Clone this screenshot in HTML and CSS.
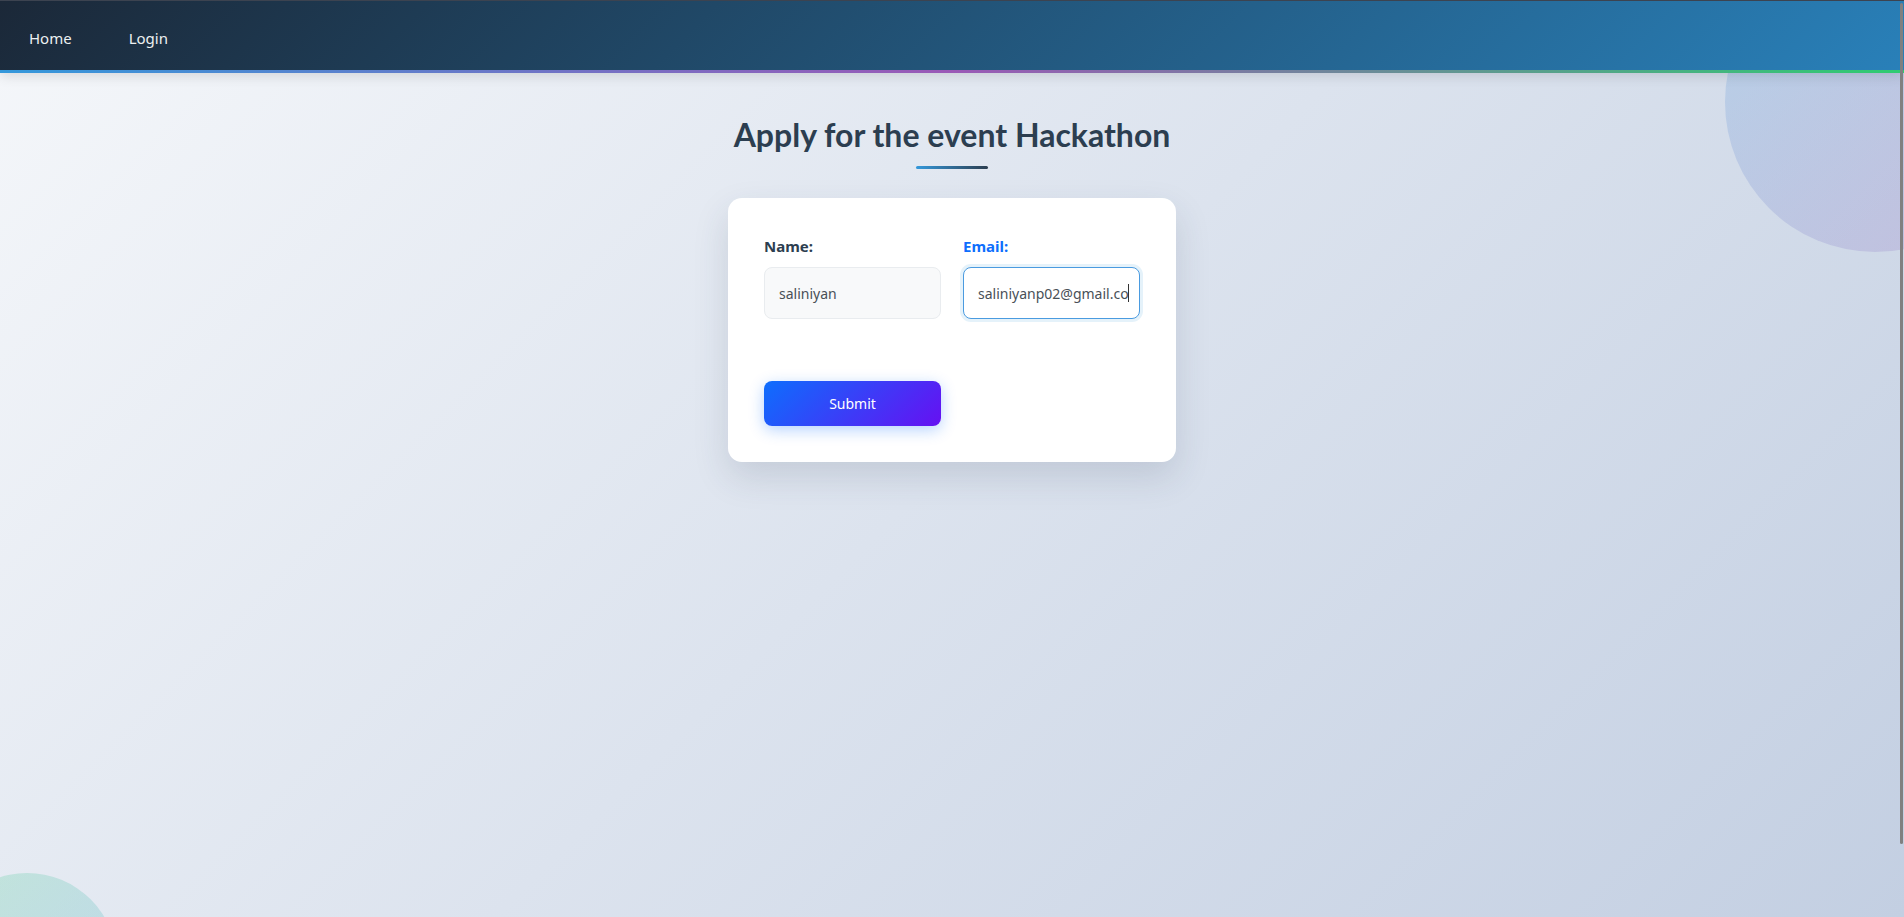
FILE: index.html
```html
<!DOCTYPE html>
<html lang="en">
<head>
<meta charset="utf-8">
<title>Apply for the event Hackathon</title>
<link rel="stylesheet" href="styles.css">
</head>
<body>
<div class="page">
  <nav class="navbar">
    <a class="nav-link" href="#">Home</a>
    <a class="nav-link" href="#">Login</a>
  </nav>
  <div class="blob blob-right"></div>
  <div class="blob blob-left"></div>
  <main class="main">
    <h1 class="title">Apply for the event Hackathon</h1>
    <div class="title-line"></div>
    <form class="card">
      <div class="fields">
        <div class="field">
          <label class="label">Name:</label>
          <input class="input" type="text" value="saliniyan">
        </div>
        <div class="field">
          <label class="label label-active">Email:</label>
          <div class="input input-focus"><span class="input-text">saliniyanp02@gmail.co</span><span class="caret"></span></div>
        </div>
      </div>
      <div class="actions">
        <button class="btn" type="button">Submit</button>
      </div>
    </form>
  </main>
  <div class="scroll-thumb"></div>
</div>
</body>
</html>
```

FILE: styles.css
```css
* { box-sizing: border-box; }
html, body { margin: 0; padding: 0; height: 100%; }
body {
  font-family: "Noto Sans", "DejaVu Sans", sans-serif;
  background: linear-gradient(135deg, #f5f7fa 0%, #c3cfe2 100%);
  color: #2c3e50;
  overflow: hidden;
}
.page {
  position: relative;
  min-height: 917px;
  overflow: hidden;
}
.navbar {
  height: 73px;
  display: flex;
  align-items: center;
  padding: 4px 0 3px 29px;
  border-top: 1px solid #3c4350;
  background:
    linear-gradient(90deg, #3498db 0%, #9b59b6 50%, #2ecc71 100%) left bottom / 100% 3px no-repeat,
    linear-gradient(135deg, #1b2838 0%, #2980b9 100%);
  box-shadow: 0 3px 12px rgba(0, 0, 0, 0.12);
  position: relative;
  z-index: 2;
}
.nav-link {
  color: #ecf0f1;
  text-decoration: none;
  font-size: 15px;
  margin-right: 57px;
}
.blob {
  position: absolute;
  border-radius: 50%;
  opacity: 0.2;
  z-index: 1;
}
.blob-right {
  width: 300px;
  height: 300px;
  left: 1725px;
  top: -48px;
  background: linear-gradient(135deg, #3498db, #9b59b6);
}
.blob-left {
  width: 180px;
  height: 180px;
  left: -63px;
  top: 873px;
  background: linear-gradient(135deg, #2ecc71, #3498db);
}
.main {
  position: relative;
  z-index: 1;
  display: flex;
  flex-direction: column;
  align-items: center;
  padding-top: 42px;
}
.title {
  margin: 0;
  font-family: "Lato", "Noto Sans", sans-serif;
  font-size: 32px;
  line-height: 40px;
  font-weight: 700;
  color: #2c3e50;
}
.title-line {
  width: 72px;
  height: 3px;
  border-radius: 2px;
  margin: 11px 0 29px;
  background: linear-gradient(90deg, #3498db, #2c3e50);
}
.card {
  width: 448px;
  background: #fff;
  border-radius: 14px;
  padding: 36px;
  box-shadow: 0 15px 35px rgba(50, 60, 90, 0.15);
}
.fields,
.actions {
  display: grid;
  grid-template-columns: minmax(0, 1fr) minmax(0, 1fr);
  gap: 22px;
}
.field {
  display: flex;
  flex-direction: column;
  min-width: 0;
}
.label {
  font-size: 15px;
  line-height: 24px;
  font-weight: 700;
  color: #2c3e50;
  margin-bottom: 9px;
}
.label-active { color: #0d6efd; }
.input {
  height: 52px;
  width: 100%;
  min-width: 0;
  border: 1px solid #e9ecef;
  border-radius: 8px;
  background: #f8f9fa;
  padding: 0 14px;
  font-family: inherit;
  font-size: 14px;
  color: #495057;
  outline: none;
}
.input-focus {
  display: flex;
  align-items: center;
  background: #fff;
  border-color: #4a9be0;
  box-shadow: 0 0 0 3px rgba(52, 152, 219, 0.13);
  overflow: hidden;
  white-space: nowrap;
}
.input-text { flex: none; }
.caret {
  flex: none;
  width: 1px;
  height: 18px;
  background: #333;
  margin-left: -1px;
}
.actions {
  margin-top: 62px;
}
.btn {
  height: 45px;
  border: none;
  border-radius: 8px;
  background: linear-gradient(135deg, #0d6efd 0%, #6610f2 100%);
  color: #fff;
  font-family: inherit;
  font-size: 14px;
  box-shadow: 0 4px 15px rgba(13, 110, 253, 0.3);
  cursor: pointer;
}
.scroll-thumb {
  position: fixed;
  right: 1px;
  top: 3px;
  width: 3px;
  height: 841px;
  background: #808080;
  border-radius: 2px;
  z-index: 5;
}
```
